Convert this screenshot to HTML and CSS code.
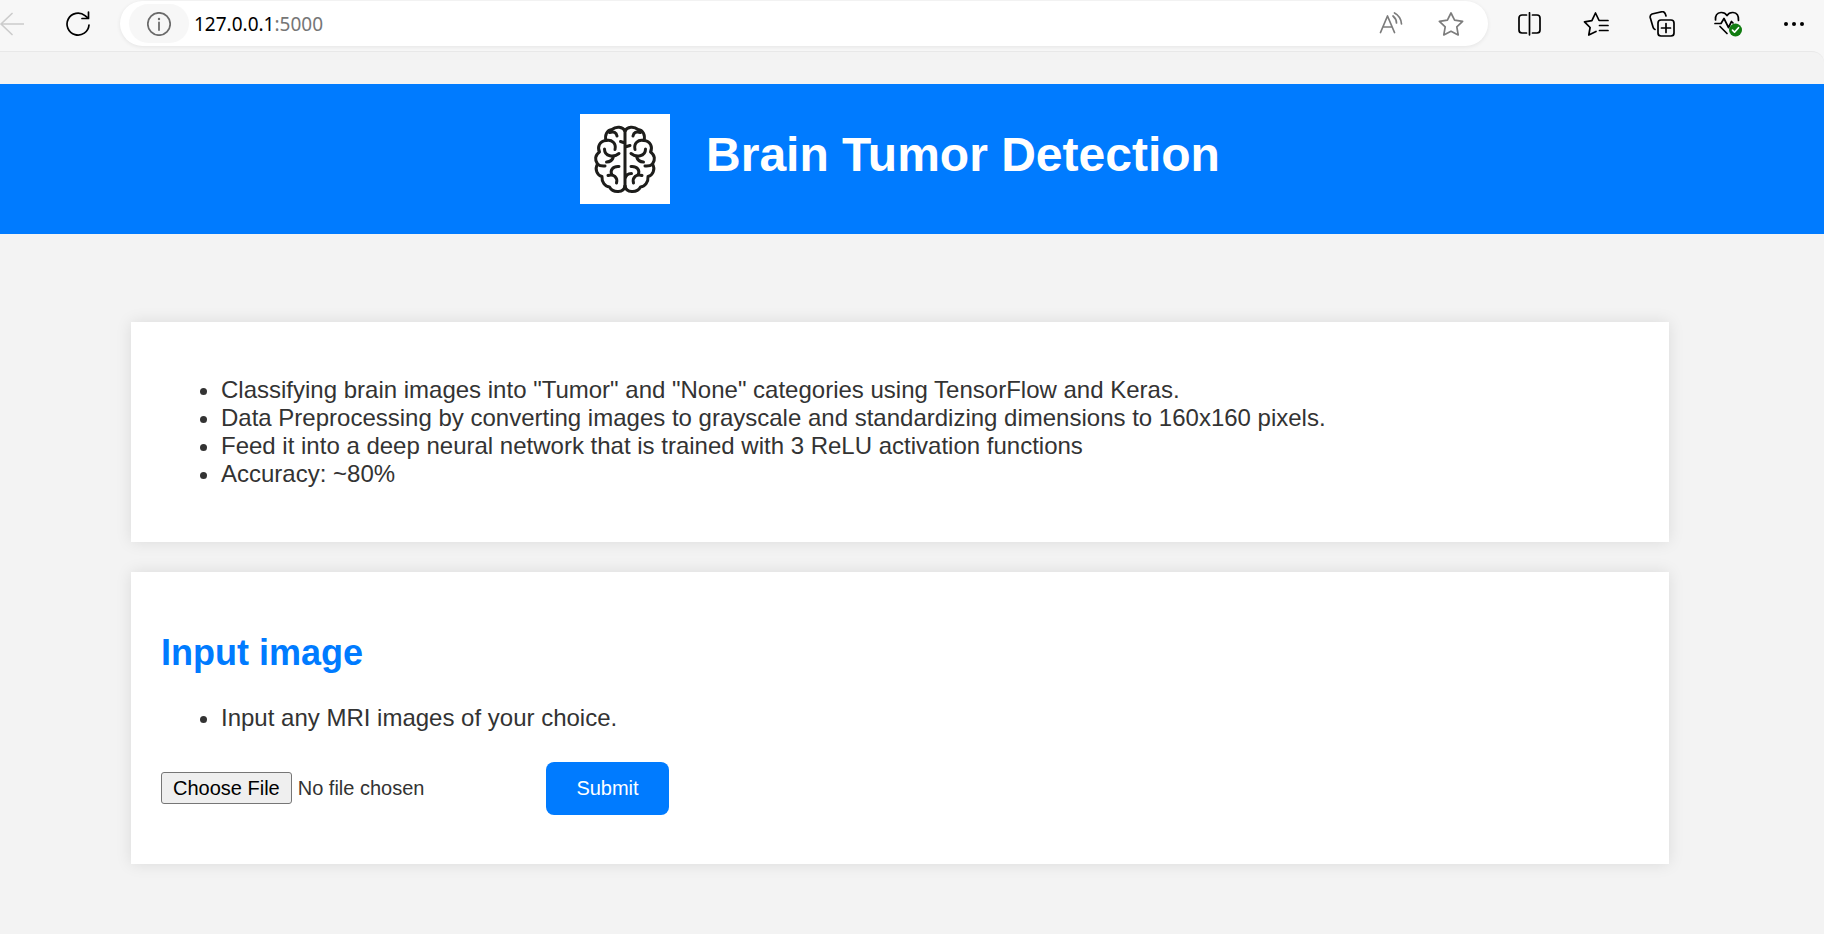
FILE: index.html
```html
<!DOCTYPE html>
<html lang="en">
<head>
<meta charset="utf-8">
<title>Brain Tumor Detection</title>
<link rel="stylesheet" href="styles.css">
</head>
<body>
<nav class="toolbar" aria-label="Browser toolbar">
  <button class="tool tool-back" aria-label="Back" disabled>
    <svg viewBox="0 0 24 24" width="24" height="24"><path d="M24 12H1M12 1.500L1 12l11 10.500"/></svg>
  </button>
  <button class="tool" aria-label="Reload">
    <svg viewBox="0 0 24 26" width="24" height="26"><path d="M23 14A11 11 0 1 1 19 4.600L22 7"/><path d="M22.500 1v6.500H16"/></svg>
  </button>
  <div class="address">
    <button class="site-info" aria-label="Site information">
      <svg viewBox="0 0 24 24" width="24" height="24"><circle cx="12" cy="12" r="11.200"/><path d="M12 10.500V18" stroke-width="1.800"/><circle class="fill" cx="12" cy="7" r="1.200"/></svg>
    </button>
    <a class="url" href="#"><span class="host">127.0.0.1</span>:5000</a>
    <button class="tool tool-dim" aria-label="Read aloud">
      <svg viewBox="0 0 24 24" width="24" height="24"><path d="M1.500 20.500L8.500 4l7 16.500M4 15h9M14 4q3.500 3 3.500 7M15.500 1q6.500 3.500 7 11"/></svg>
    </button>
    <button class="tool tool-dim" aria-label="Add to favorites">
      <svg viewBox="0 0 26 24" width="26" height="24"><path d="M13 1l3.600 7.200 8 1.200-5.800 5.500 1.400 8L13 19.300l-7.200 3.600 1.400-8L1.400 9.400l8-1.200z"/></svg>
    </button>
  </div>
  <div class="tools">
    <button class="tool" aria-label="Split screen">
      <svg viewBox="0 0 24 24" width="24" height="24"><path d="M8.500 3H4a3 3 0 0 0-3 3v12a3 3 0 0 0 3 3h4.500M14.500 3H19a3 3 0 0 1 3 3v12a3 3 0 0 1-3 3h-4.500M11.500 .8v22"/></svg>
    </button>
    <button class="tool" aria-label="Favorites">
      <svg viewBox="0 0 26 24" width="26" height="24"><path d="M13 19.500L5.800 23l1.300-7.500L1.500 9.800l7.400-1.100L12.500 1l3.600 7.500H25M16.500 13.500H25M16.500 18.500H25"/></svg>
    </button>
    <button class="tool" aria-label="Collections">
      <svg viewBox="0 0 26 26" width="26" height="26"><path d="M6 18.500Q4.500 18 4 16L1.200 6.500Q.8 4 3 3l10-2.300Q15.800.3 17 5"/><rect x="9" y="9" width="16" height="16" rx="3"/><path d="M17 12.500v9M12.500 17h9"/></svg>
    </button>
    <button class="tool" aria-label="Browser essentials">
      <svg viewBox="0 0 28 26" width="28" height="26"><path d="M1.500 9Q1 2 7 1.500q4-.2 6 3 2-3.200 6-3 6 .5 5.500 8M1 12.500h6l3-5 4.500 9 3-6 1.500 1.500M6 15.500L13 22.500"/><circle class="badge" cx="21.500" cy="19" r="6.500"/><path class="tick" d="M18.500 19.200l2 2 4-4.500"/></svg>
    </button>
    <button class="tool" aria-label="More">
      <svg viewBox="0 0 24 24" width="24" height="24"><g class="fill"><circle cx="4" cy="12" r="2"/><circle cx="12" cy="12" r="2"/><circle cx="20" cy="12" r="2"/></g></svg>
    </button>
  </div>
</nav>
<div class="page">
  <header class="banner">
    <svg class="logo" viewBox="0 0 90 90" width="90" height="90" role="img" aria-label="Brain">
      <g id="hemisphere">
        <path d="M45 17C43 12.500 36 12 32 15.500C27 16 24.500 21 26 26.500C19.500 27 17 33 19.500 38C15 41 14.500 46 17.500 50C14.500 55 17 61.500 22 62.500C21.500 68 25 72.500 29.500 73C33 79.500 44 79 45 72"/>
        <path d="M29.500 18.500Q36 16.500 37 22"/>
        <path d="M26 26.500C32 25 36.500 29.500 35 35.500"/>
        <path d="M24.500 35C24.500 43 34 43.500 39 39.500M33.500 42.500Q32 48 26.500 48"/>
        <path d="M17.500 50Q20 52.500 25 52"/>
        <path d="M39 52.500C33 52 29.500 56 32 61M28 61.500C33.500 59.500 38 63.500 36.500 69"/>
      </g>
      <use href="#hemisphere" transform="matrix(-1 0 0 1 90 0)"/>
      <path d="M45 16V74M40.500 27.500L45 29M50 31.500L45 33M51.500 59.500Q46 59.500 45 65"/>
    </svg>
    <h1>Brain Tumor Detection</h1>
  </header>
  <main class="content">
    <section class="card">
      <ul>
        <li>Classifying brain images into "Tumor" and "None" categories using TensorFlow and Keras.</li>
        <li>Data Preprocessing by converting images to grayscale and standardizing dimensions to 160x160 pixels.</li>
        <li>Feed it into a deep neural network that is trained with 3 ReLU activation functions</li>
        <li>Accuracy: ~80%</li>
      </ul>
    </section>
    <section class="card">
      <h2 id="input-title">Input image</h2>
      <ul>
        <li>Input any MRI images of your choice.</li>
      </ul>
      <form class="upload">
        <input class="file" type="file" aria-labelledby="input-title">
        <button class="submit" type="submit">Submit</button>
      </form>
    </section>
  </main>
</div>
</body>
</html>
```
FILE: styles.css
```css
* { box-sizing: border-box; }
body {
  margin: 0;
  background: #f7f7f7;
  color: #333;
  font: 24px/28px "Liberation Sans", Arial, sans-serif;
}
button { font: inherit; border: 0; cursor: pointer; }

.toolbar {
  display: flex;
  align-items: center;
  padding: 1px 14px 5px 0;
}
.tool {
  display: flex;
  align-items: center;
  justify-content: center;
  width: 32px;
  height: 32px;
  padding: 0;
  background: none;
  color: #000;
}
.tool-back { width: 24px; margin-right: 38px; color: #ccc; }
.tool-dim { color: #7c7c7c; }
.toolbar svg {
  flex: none;
  fill: none;
  stroke: currentColor;
  stroke-width: 1.7;
  stroke-linecap: round;
  stroke-linejoin: round;
}
.toolbar .fill { fill: currentColor; stroke: none; }
.toolbar .badge { fill: #107c10; stroke: none; }
.toolbar .tick { stroke: #fff; }
.address {
  flex: 1;
  display: flex;
  align-items: center;
  gap: 28px;
  margin: 0 26px;
  padding: 3px 21px 3px 9px;
  border-radius: 24px;
  background: #fff;
  box-shadow: 0 1px 4px rgba(0, 0, 0, 0.08);
}
.site-info {
  display: flex;
  align-items: center;
  justify-content: center;
  width: 60px;
  height: 39px;
  margin-right: -23px;
  border-radius: 20px;
  background: #f7f7f7;
  color: #6b6b6b;
}
.url {
  flex: 1;
  color: #767676;
  font: 19px/28px "Noto Sans", sans-serif;
  text-decoration: none;
}
.host { color: #000; }
.tools { display: flex; gap: 34px; }

.page {
  min-height: calc(100vh - 51px);
  padding: 32px 0 70px;
  border-top: 1px solid #e8e8e8;
  border-top-right-radius: 12px;
  background: #f3f3f3;
}
.banner {
  display: flex;
  justify-content: center;
  gap: 36px;
  padding: 30px 24px 30px 0;
  background: #007bff;
  color: #fff;
}
.logo {
  background: #fff;
  fill: none;
  stroke: #1d1d1b;
  stroke-width: 3;
  stroke-linecap: round;
  stroke-linejoin: round;
}
h1 { margin: 13px 0 0; font-size: 48px; line-height: 56px; }
.content {
  display: flex;
  flex-direction: column;
  gap: 30px;
  margin: 88px 155px 0 131px;
}
.card {
  padding: 30px;
  background: #fff;
  box-shadow: 0 0 15px rgba(0, 0, 0, 0.1);
}
.card ul { margin: 24px 0; padding-left: 60px; }
.card h2 {
  margin: 30px 0;
  color: #007bff;
  font-size: 36px;
  line-height: 42px;
}
.upload {
  display: flex;
  align-items: center;
  padding: 6px 0 19px;
}
.file {
  width: 385px;
  padding-bottom: 2px;
  color: #333;
  font: 20px/24px "Liberation Sans", Arial, sans-serif;
}
.file::file-selector-button {
  height: 32px;
  margin-right: 6px;
  padding: 1px 11px;
  border: 1px solid #767676;
  border-radius: 3px;
  background: #efefef;
  color: #000;
  font: inherit;
}
.submit {
  min-width: 123px;
  padding: 15px 30px;
  border-radius: 8px;
  background: #007bff;
  color: #fff;
  font-size: 20px;
  line-height: 23px;
}
```
